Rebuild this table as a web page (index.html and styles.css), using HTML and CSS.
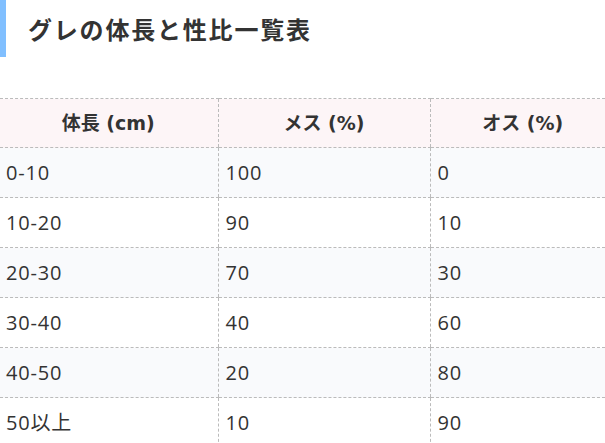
FILE: index.html
```html
<!DOCTYPE html>
<html lang="ja">
<head>
<meta charset="utf-8">
<link rel="stylesheet" href="styles.css">
</head>
<body>
<h2 class="heading">グレの体長と性比一覧表</h2>
<table class="tbl">
<colgroup><col class="c1"><col class="c2"><col class="c3"></colgroup>
<thead>
<tr><th>体長 (cm)</th><th>メス (%)</th><th>オス (%)</th></tr>
</thead>
<tbody>
<tr class="odd"><td>0-10</td><td>100</td><td>0</td></tr>
<tr><td>10-20</td><td>90</td><td>10</td></tr>
<tr class="odd"><td>20-30</td><td>70</td><td>30</td></tr>
<tr><td>30-40</td><td>40</td><td>60</td></tr>
<tr class="odd"><td>40-50</td><td>20</td><td>80</td></tr>
<tr><td>50以上</td><td>10</td><td>90</td></tr>
</tbody>
</table>
</body>
</html>
```
FILE: styles.css
```css
html, body {
  margin: 0;
  padding: 0;
  background: #fff;
  overflow: hidden;
}
body {
  font-family: "DejaVu Sans", "Noto Sans CJK JP", sans-serif;
  color: #333;
}
.heading {
  margin: 0;
  height: 57px;
  box-sizing: border-box;
  border-left: 6px solid #80bfff;
  padding-left: 22px;
  display: flex;
  align-items: center;
  font-family: "Noto Sans CJK JP", sans-serif;
  font-size: 24px;
  font-weight: bold;
  letter-spacing: 1.8px;
  line-height: 1;
}
.tbl {
  margin-top: 41px;
  border-collapse: collapse;
  table-layout: fixed;
  width: 605px;
  font-size: 19px;
}
.c1 { width: 218px; }
.c2 { width: 212px; }
.c3 { width: 175px; }
.tbl th, .tbl td {
  border-top: 1px dashed #bbb;
  border-bottom: 1px dashed #bbb;
  border-left: 1px dashed #bbb;
  height: 50px;
  padding: 0 7px;
  box-sizing: border-box;
  line-height: 1.2;
  white-space: nowrap;
}
.tbl th {
  height: 49px;
  background: #fdf5f7;
  font-weight: bold;
  text-align: center;
}
.tbl th:first-child, .tbl td:first-child {
  border-left: none;
  padding-left: 6px;
}
.tbl th:last-child {
  padding-left: 10px;
  padding-right: 0;
}
.tbl td {
  text-align: left;
  font-family: "Open Sans", "Noto Sans CJK JP", sans-serif;
  font-size: 20px;
  letter-spacing: 0.8px;
  font-weight: normal;
  color: #333;
}
.tbl tr.odd td {
  background: #f9fafc;
}
```
